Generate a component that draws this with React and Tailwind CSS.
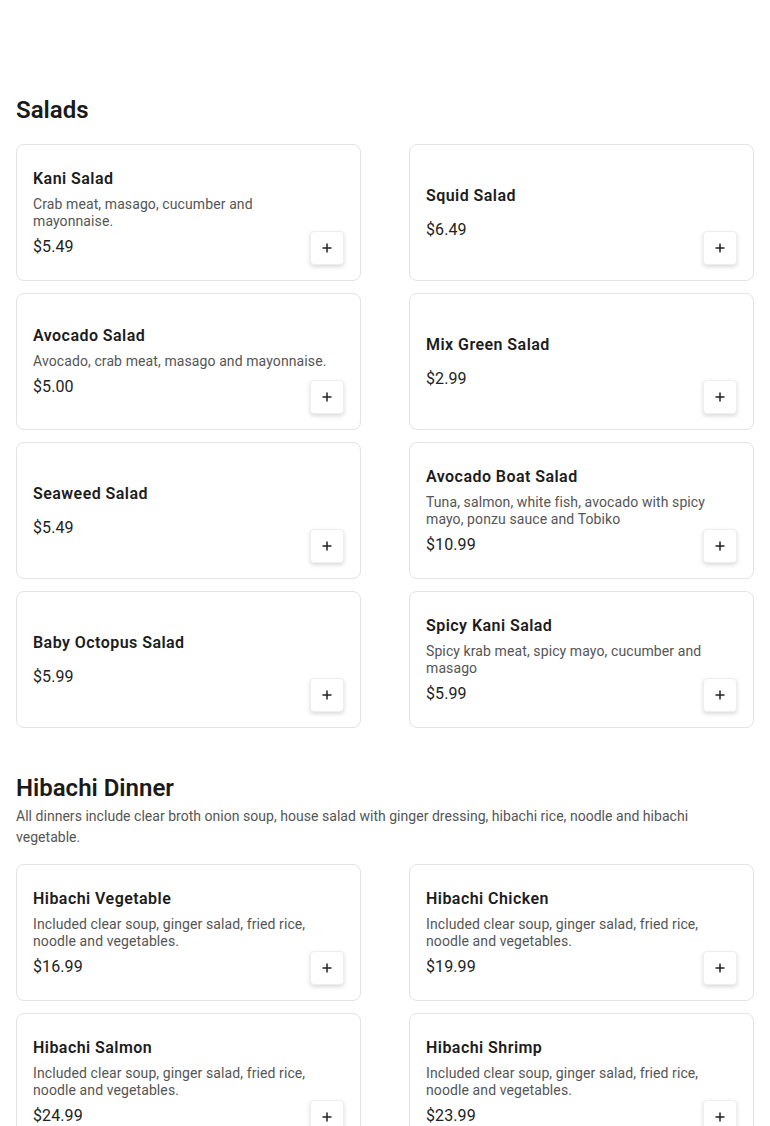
import React from "react";

const salads = [
  { name: "Kani Salad", desc: "Crab meat, masago, cucumber and mayonnaise.", price: "$5.49" },
  { name: "Squid Salad", desc: "", price: "$6.49" },
  { name: "Avocado Salad", desc: "Avocado, crab meat, masago and mayonnaise.", price: "$5.00" },
  { name: "Mix Green Salad", desc: "", price: "$2.99" },
  { name: "Seaweed Salad", desc: "", price: "$5.49" },
  { name: "Avocado Boat Salad", desc: "Tuna, salmon, white fish, avocado with spicy mayo, ponzu sauce and Tobiko", price: "$10.99" },
  { name: "Baby Octopus Salad", desc: "", price: "$5.99" },
  { name: "Spicy Kani Salad", desc: "Spicy krab meat, spicy mayo, cucumber and masago", price: "$5.99" },
];

const hib = "Included clear soup, ginger salad, fried rice, noodle and vegetables.";
const hibachi = [
  { name: "Hibachi Vegetable", desc: hib, price: "$16.99" },
  { name: "Hibachi Chicken", desc: hib, price: "$19.99" },
  { name: "Hibachi Salmon", desc: hib, price: "$24.99" },
  { name: "Hibachi Shrimp", desc: hib, price: "$23.99" },
];

function Card({ item }) {
  return (
    <div className="relative flex min-h-[137px] items-center rounded-lg border border-[#e3e3e3] bg-white px-4 py-4">
      <div className="flex w-full flex-col">
        <div className="text-[16px] font-semibold leading-6 tracking-[0.45px] text-[#1c1c1c]">{item.name}</div>
        <div className="mt-[5px] max-w-[300px] text-[14px] leading-[17px] tracking-[0.1px] text-[#555555]">{item.desc}</div>
        <div className="mt-[5px] text-[16px] font-normal leading-6 tracking-[0.1px] text-[#222222]">{item.price}</div>
      </div>
      <button className="absolute bottom-[15px] right-4 flex h-[34px] w-[34px] items-center justify-center rounded-[4px] border border-[#eeeeee] bg-white shadow-[0_2px_4px_rgba(0,0,0,0.15)]">
        <svg width="10" height="10" viewBox="0 0 10 10">
          <path d="M5 0.5v9M0.5 5h9" stroke="#222" strokeWidth="1.5" />
        </svg>
      </button>
    </div>
  );
}

function Section({ title, desc, items, className }) {
  return (
    <section className={className}>
      <h2 className="text-[24px] font-semibold leading-9 text-[#1a1a1a]">{title}</h2>
      {desc && <p className="max-w-[700px] text-[14px] leading-[21px] tracking-[0.03px] text-[#555555]">{desc}</p>}
      <div className="mt-4 grid grid-cols-2 gap-x-12 gap-y-3">
        {items.map((it) => (
          <Card key={it.name} item={it} />
        ))}
      </div>
    </section>
  );
}

export default function App() {
  return (
    <div className="min-h-screen bg-white px-4 pt-[92px] pb-10" style={{ fontFamily: "Roboto, 'Liberation Sans', sans-serif" }}>
      <Section title="Salads" items={salads} />
      <Section
        className="mt-[42px]"
        title="Hibachi Dinner"
        desc="All dinners include clear broth onion soup, house salad with ginger dressing, hibachi rice, noodle and hibachi vegetable."
        items={hibachi}
      />
    </div>
  );
}
